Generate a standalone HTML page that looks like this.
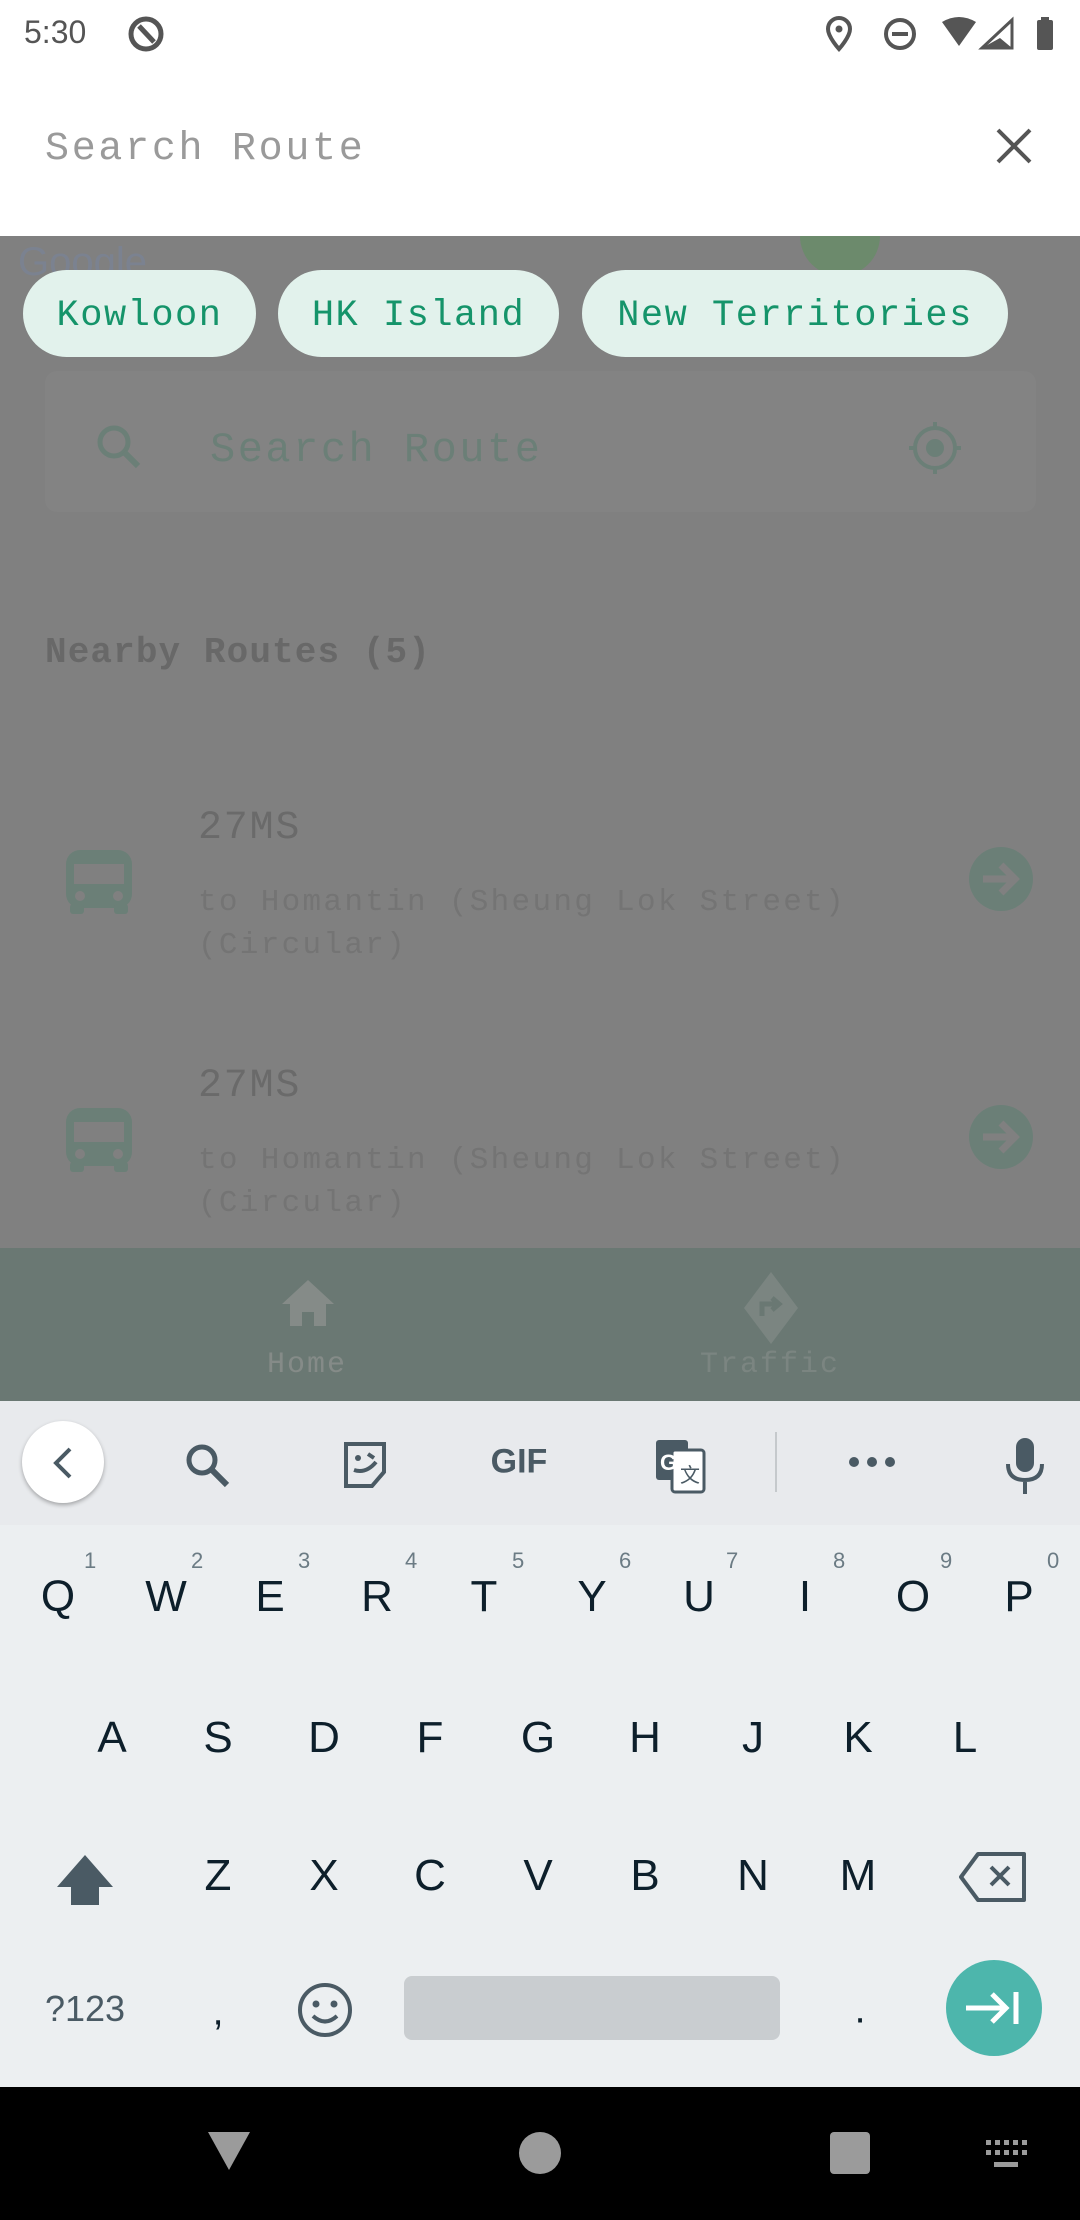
<!DOCTYPE html>
<html><head><meta charset="utf-8"><style>
*{margin:0;padding:0;box-sizing:border-box}
body{width:1080px;height:2220px;position:relative;overflow:hidden;background:#808080;font-family:"Liberation Sans",sans-serif}
.a{position:absolute}
.c{position:absolute;transform:translate(-50%,-50%);white-space:nowrap}
.m{font-family:"Liberation Mono","DejaVu Sans Mono",monospace}
.chip{position:absolute;top:270px;height:87px;border-radius:44px;background:#e2f2ec;color:#15946a;font-size:37px;letter-spacing:1.5px;display:flex;align-items:center;justify-content:center;font-family:"Liberation Mono",monospace;padding-top:4px}
.k{position:absolute;transform:translate(-50%,-50%);font-size:44px;color:#0d1f2b}
.n{position:absolute;font-size:22px;color:#6b7b84}
.d{letter-spacing:2.3px}
</style></head><body>
<div class="a" style="left:0;top:0;width:1080px;height:236px;background:#fff"></div>
<div class="a" style="left:24px;top:14px;font-size:32px;color:#555">5:30</div>
<svg class="a" style="left:126px;top:14px" width="40" height="40" viewBox="0 0 40 40"><circle cx="20" cy="20" r="15" fill="none" stroke="#555" stroke-width="5"/><path d="M13 12 L28 28" stroke="#555" stroke-width="5"/></svg>
<svg class="a" style="left:822px;top:14px" width="260" height="40" viewBox="0 0 260 40">
<path d="M17 4a11 11 0 0 0-11 11c0 8 11 20 11 20s11-12 11-20A11 11 0 0 0 17 4z" fill="none" stroke="#555" stroke-width="4"/><circle cx="17" cy="15" r="3.5" fill="#555"/>
<circle cx="78" cy="20" r="14" fill="none" stroke="#555" stroke-width="4"/><rect x="70" y="18" width="16" height="4" fill="#555"/>
<path d="M120 8 Q137 -2 154 8 L137 32 Z" fill="#555"/>
<path d="M190 6 L190 34 L160 34 Z" fill="none" stroke="#555" stroke-width="3"/><path d="M178 24 L190 34 L160 34 Z" fill="#555"/>
<rect x="215" y="6" width="16" height="30" rx="2" fill="#555"/><rect x="219" y="3" width="8" height="4" fill="#555"/>
</svg>
<div class="a m" style="left:45px;top:127px;font-size:40px;letter-spacing:2.7px;color:#9a9a9a">Search Route</div>
<svg class="a" style="left:994px;top:126px" width="40" height="40" viewBox="0 0 40 40"><path d="M4 4L36 36M36 4L4 36" stroke="#555" stroke-width="4"/></svg>

<div class="a" style="left:18px;top:240px;font-size:40px;color:#7a8395;opacity:.8">Google</div>
<div class="a" style="left:800px;top:236px;width:80px;height:40px;background:#6c8a6c;border-radius:0 0 40px 40px"></div>

<div class="chip" style="left:23px;width:233px">Kowloon</div>
<div class="chip" style="left:278px;width:281px">HK Island</div>
<div class="chip" style="left:582px;width:426px">New Territories</div>

<div class="a" style="left:45px;top:371px;width:991px;height:141px;background:#838383;border-radius:12px"></div>
<svg class="a" style="left:92px;top:420px" width="56" height="56" viewBox="0 0 56 56"><circle cx="22" cy="22" r="14" fill="none" stroke="#6b7f77" stroke-width="5"/><path d="M32 32L46 46" stroke="#6b7f77" stroke-width="6"/></svg>
<div class="a m" style="left:210px;top:426px;font-size:42px;letter-spacing:2.5px;color:#6b7f77">Search Route</div>
<svg class="a" style="left:905px;top:418px" width="60" height="60" viewBox="0 0 60 60"><circle cx="30" cy="30" r="20" fill="none" stroke="#6b7f77" stroke-width="4"/><circle cx="30" cy="30" r="9" fill="#6b7f77"/><path d="M30 4V12M30 48V56M4 30H12M48 30H56" stroke="#6b7f77" stroke-width="4"/></svg>

<div class="a m" style="left:45px;top:632px;font-size:36px;letter-spacing:1.1px;color:#686868;font-weight:bold">Nearby Routes (5)</div>

<div class="a m" style="left:198px;top:806px;font-size:40px;letter-spacing:1.8px;color:#6a6a6a">27MS</div>
<div class="a m d" style="left:198px;top:881px;font-size:31px;color:#747474;line-height:43px">to Homantin (Sheung Lok Street)<br>(Circular)</div>
<div class="a m" style="left:198px;top:1064px;font-size:40px;letter-spacing:1.8px;color:#6a6a6a">27MS</div>
<div class="a m d" style="left:198px;top:1139px;font-size:31px;color:#747474;line-height:43px">to Homantin (Sheung Lok Street)<br>(Circular)</div>
<svg class="a" style="left:64px;top:846px" width="70" height="70" viewBox="0 0 70 70"><rect x="2" y="4" width="66" height="58" rx="14" fill="#6b7f77"/><rect x="10" y="18" width="50" height="20" fill="#808080"/><circle cx="16" cy="50" r="5" fill="#808080"/><circle cx="54" cy="50" r="5" fill="#808080"/><rect x="6" y="58" width="14" height="10" rx="3" fill="#6b7f77"/><rect x="50" y="58" width="14" height="10" rx="3" fill="#6b7f77"/></svg>
<svg class="a" style="left:64px;top:1104px" width="70" height="70" viewBox="0 0 70 70"><rect x="2" y="4" width="66" height="58" rx="14" fill="#6b7f77"/><rect x="10" y="18" width="50" height="20" fill="#808080"/><circle cx="16" cy="50" r="5" fill="#808080"/><circle cx="54" cy="50" r="5" fill="#808080"/><rect x="6" y="58" width="14" height="10" rx="3" fill="#6b7f77"/><rect x="50" y="58" width="14" height="10" rx="3" fill="#6b7f77"/></svg>
<svg class="a" style="left:969px;top:847px" width="64" height="64" viewBox="0 0 64 64"><circle cx="32" cy="32" r="32" fill="#6b7f77"/><path d="M14 32H46M32 18L46 32L32 46" fill="none" stroke="#808080" stroke-width="7"/></svg>
<svg class="a" style="left:969px;top:1105px" width="64" height="64" viewBox="0 0 64 64"><circle cx="32" cy="32" r="32" fill="#6b7f77"/><path d="M14 32H46M32 18L46 32L32 46" fill="none" stroke="#808080" stroke-width="7"/></svg>

<div class="a" style="left:0;top:1248px;width:1080px;height:153px;background:#6a7873"></div>
<svg class="a" style="left:280px;top:1278px" width="56" height="50" viewBox="0 0 56 50"><path d="M28 2L2 26H10V48H22V34H34V48H46V26H54Z" fill="#858b88"/></svg>
<div class="c m" style="left:307px;top:1365px;font-size:30px;letter-spacing:2px;color:#858b88">Home</div>
<svg class="a" style="left:742px;top:1270px" width="58" height="76" viewBox="0 0 58 76"><path d="M29 2L56 38L29 74L2 38Z" fill="#7b8581"/><path d="M20 46V34H36M30 28L37 34L30 40" fill="none" stroke="#6a7873" stroke-width="5"/></svg>
<div class="c m" style="left:770px;top:1365px;font-size:30px;letter-spacing:2px;color:#7b8581">Traffic</div>

<div class="a" style="left:0;top:1401px;width:1080px;height:124px;background:#e8eaed"></div>
<div class="a" style="left:0;top:1525px;width:1080px;height:562px;background:#eceff1"></div>
<div class="a" style="left:22px;top:1421px;width:82px;height:82px;border-radius:50%;background:#fff;box-shadow:0 2px 4px rgba(0,0,0,.3)"></div>
<svg class="a" style="left:50px;top:1446px" width="26" height="34" viewBox="0 0 26 34"><path d="M20 3L6 17L20 31" fill="none" stroke="#4a5a64" stroke-width="4"/></svg>
<svg class="a" style="left:182px;top:1440px" width="52" height="52" viewBox="0 0 52 52"><circle cx="20" cy="20" r="13" fill="none" stroke="#4a5a64" stroke-width="5"/><path d="M29 29L45 45" stroke="#4a5a64" stroke-width="6"/></svg>
<svg class="a" style="left:340px;top:1440px" width="50" height="50" viewBox="0 0 50 50"><path d="M6 4H44V32L32 46H6Z" fill="none" stroke="#4a5a64" stroke-width="4"/><circle cx="18" cy="18" r="3" fill="#4a5a64"/><path d="M28 14L34 18M14 30Q26 34 36 22" fill="none" stroke="#4a5a64" stroke-width="4"/></svg>
<div class="c" style="left:519px;top:1462px;font-size:34px;font-weight:bold;color:#4a5a64">GIF</div>
<svg class="a" style="left:654px;top:1438px" width="52" height="56" viewBox="0 0 52 56"><rect x="2" y="2" width="32" height="40" rx="3" fill="#4a5a64"/><rect x="18" y="12" width="32" height="42" rx="3" fill="#fff" stroke="#4a5a64" stroke-width="3"/><text x="6" y="32" font-size="22" font-weight="bold" fill="#fff" font-family="Liberation Sans">G</text><text x="26" y="44" font-size="20" fill="#4a5a64" font-family="Noto Sans CJK SC">文</text></svg>
<div class="a" style="left:775px;top:1432px;width:2px;height:60px;background:#c5c9cc"></div>
<svg class="a" style="left:846px;top:1452px" width="52" height="20" viewBox="0 0 52 20"><circle cx="8" cy="10" r="5" fill="#4a5a64"/><circle cx="26" cy="10" r="5" fill="#4a5a64"/><circle cx="44" cy="10" r="5" fill="#4a5a64"/></svg>
<svg class="a" style="left:1004px;top:1436px" width="42" height="60" viewBox="0 0 42 60"><rect x="12" y="2" width="18" height="34" rx="9" fill="#4a5a64"/><path d="M4 28Q4 44 21 44Q38 44 38 28M21 44V58" fill="none" stroke="#4a5a64" stroke-width="4"/></svg>

<div class="k" style="left:58px;top:1597px">Q</div><div class="k" style="left:166px;top:1597px">W</div><div class="k" style="left:270px;top:1597px">E</div><div class="k" style="left:377px;top:1597px">R</div><div class="k" style="left:484px;top:1597px">T</div><div class="k" style="left:592px;top:1597px">Y</div><div class="k" style="left:699px;top:1597px">U</div><div class="k" style="left:805px;top:1597px">I</div><div class="k" style="left:913px;top:1597px">O</div><div class="k" style="left:1019px;top:1597px">P</div>
<div class="n" style="left:84px;top:1548px">1</div><div class="n" style="left:191px;top:1548px">2</div><div class="n" style="left:298px;top:1548px">3</div><div class="n" style="left:405px;top:1548px">4</div><div class="n" style="left:512px;top:1548px">5</div><div class="n" style="left:619px;top:1548px">6</div><div class="n" style="left:726px;top:1548px">7</div><div class="n" style="left:833px;top:1548px">8</div><div class="n" style="left:940px;top:1548px">9</div><div class="n" style="left:1047px;top:1548px">0</div>
<div class="k" style="left:112px;top:1738px">A</div><div class="k" style="left:218px;top:1738px">S</div><div class="k" style="left:324px;top:1738px">D</div><div class="k" style="left:430px;top:1738px">F</div><div class="k" style="left:538px;top:1738px">G</div><div class="k" style="left:645px;top:1738px">H</div><div class="k" style="left:753px;top:1738px">J</div><div class="k" style="left:858px;top:1738px">K</div><div class="k" style="left:965px;top:1738px">L</div>
<svg class="a" style="left:55px;top:1853px" width="60" height="54" viewBox="0 0 60 54"><path d="M30 2L58 34H44V52H16V34H2Z" fill="#4a5a64"/></svg>
<div class="k" style="left:218px;top:1876px">Z</div><div class="k" style="left:324px;top:1876px">X</div><div class="k" style="left:430px;top:1876px">C</div><div class="k" style="left:538px;top:1876px">V</div><div class="k" style="left:645px;top:1876px">B</div><div class="k" style="left:753px;top:1876px">N</div><div class="k" style="left:858px;top:1876px">M</div>
<svg class="a" style="left:958px;top:1851px" width="70" height="52" viewBox="0 0 70 52"><path d="M20 3H66V49H20L3 26Z" fill="none" stroke="#4a5a64" stroke-width="4" stroke-linejoin="round"/><path d="M33 16L51 34M51 16L33 34" stroke="#4a5a64" stroke-width="4"/></svg>
<div class="c" style="left:85px;top:2009px;font-size:36px;color:#4a5a64">?123</div>
<div class="c" style="left:218px;top:2012px;font-size:40px;color:#0d1f2b">,</div>
<svg class="a" style="left:296px;top:1981px" width="58" height="58" viewBox="0 0 58 58"><circle cx="29" cy="29" r="25" fill="none" stroke="#4a5a64" stroke-width="4"/><circle cx="20" cy="23" r="3.5" fill="#4a5a64"/><circle cx="38" cy="23" r="3.5" fill="#4a5a64"/><path d="M17 35Q29 46 41 35" fill="none" stroke="#4a5a64" stroke-width="4"/></svg>
<div class="a" style="left:404px;top:1976px;width:376px;height:64px;background:#c9cdd0;border-radius:8px"></div>
<div class="c" style="left:860px;top:2010px;font-size:40px;color:#0d1f2b">.</div>
<div class="a" style="left:946px;top:1960px;width:96px;height:96px;border-radius:50%;background:#4db6ac"></div>
<svg class="a" style="left:962px;top:1986px" width="64" height="44" viewBox="0 0 64 44"><path d="M4 22H44M30 8L44 22L30 36M54 6V38" fill="none" stroke="#fff" stroke-width="5"/></svg>

<div class="a" style="left:0;top:2087px;width:1080px;height:133px;background:#000"></div>
<svg class="a" style="left:206px;top:2130px" width="46" height="42" viewBox="0 0 46 42"><path d="M2 2H44L23 40Z" fill="#9b9b9b"/></svg>
<div class="a" style="left:519px;top:2132px;width:42px;height:42px;border-radius:50%;background:#9b9b9b"></div>
<div class="a" style="left:830px;top:2132px;width:40px;height:42px;border-radius:4px;background:#9b9b9b"></div>
<svg class="a" style="left:984px;top:2138px" width="44" height="32" viewBox="0 0 44 32"><g fill="#9b9b9b"><rect x="2" y="2" width="5" height="5"/><rect x="11" y="2" width="5" height="5"/><rect x="20" y="2" width="5" height="5"/><rect x="29" y="2" width="5" height="5"/><rect x="38" y="2" width="5" height="5"/><rect x="2" y="12" width="5" height="5"/><rect x="11" y="12" width="5" height="5"/><rect x="20" y="12" width="5" height="5"/><rect x="29" y="12" width="5" height="5"/><rect x="38" y="12" width="5" height="5"/><rect x="10" y="24" width="24" height="5"/></g></svg>
</body></html>
